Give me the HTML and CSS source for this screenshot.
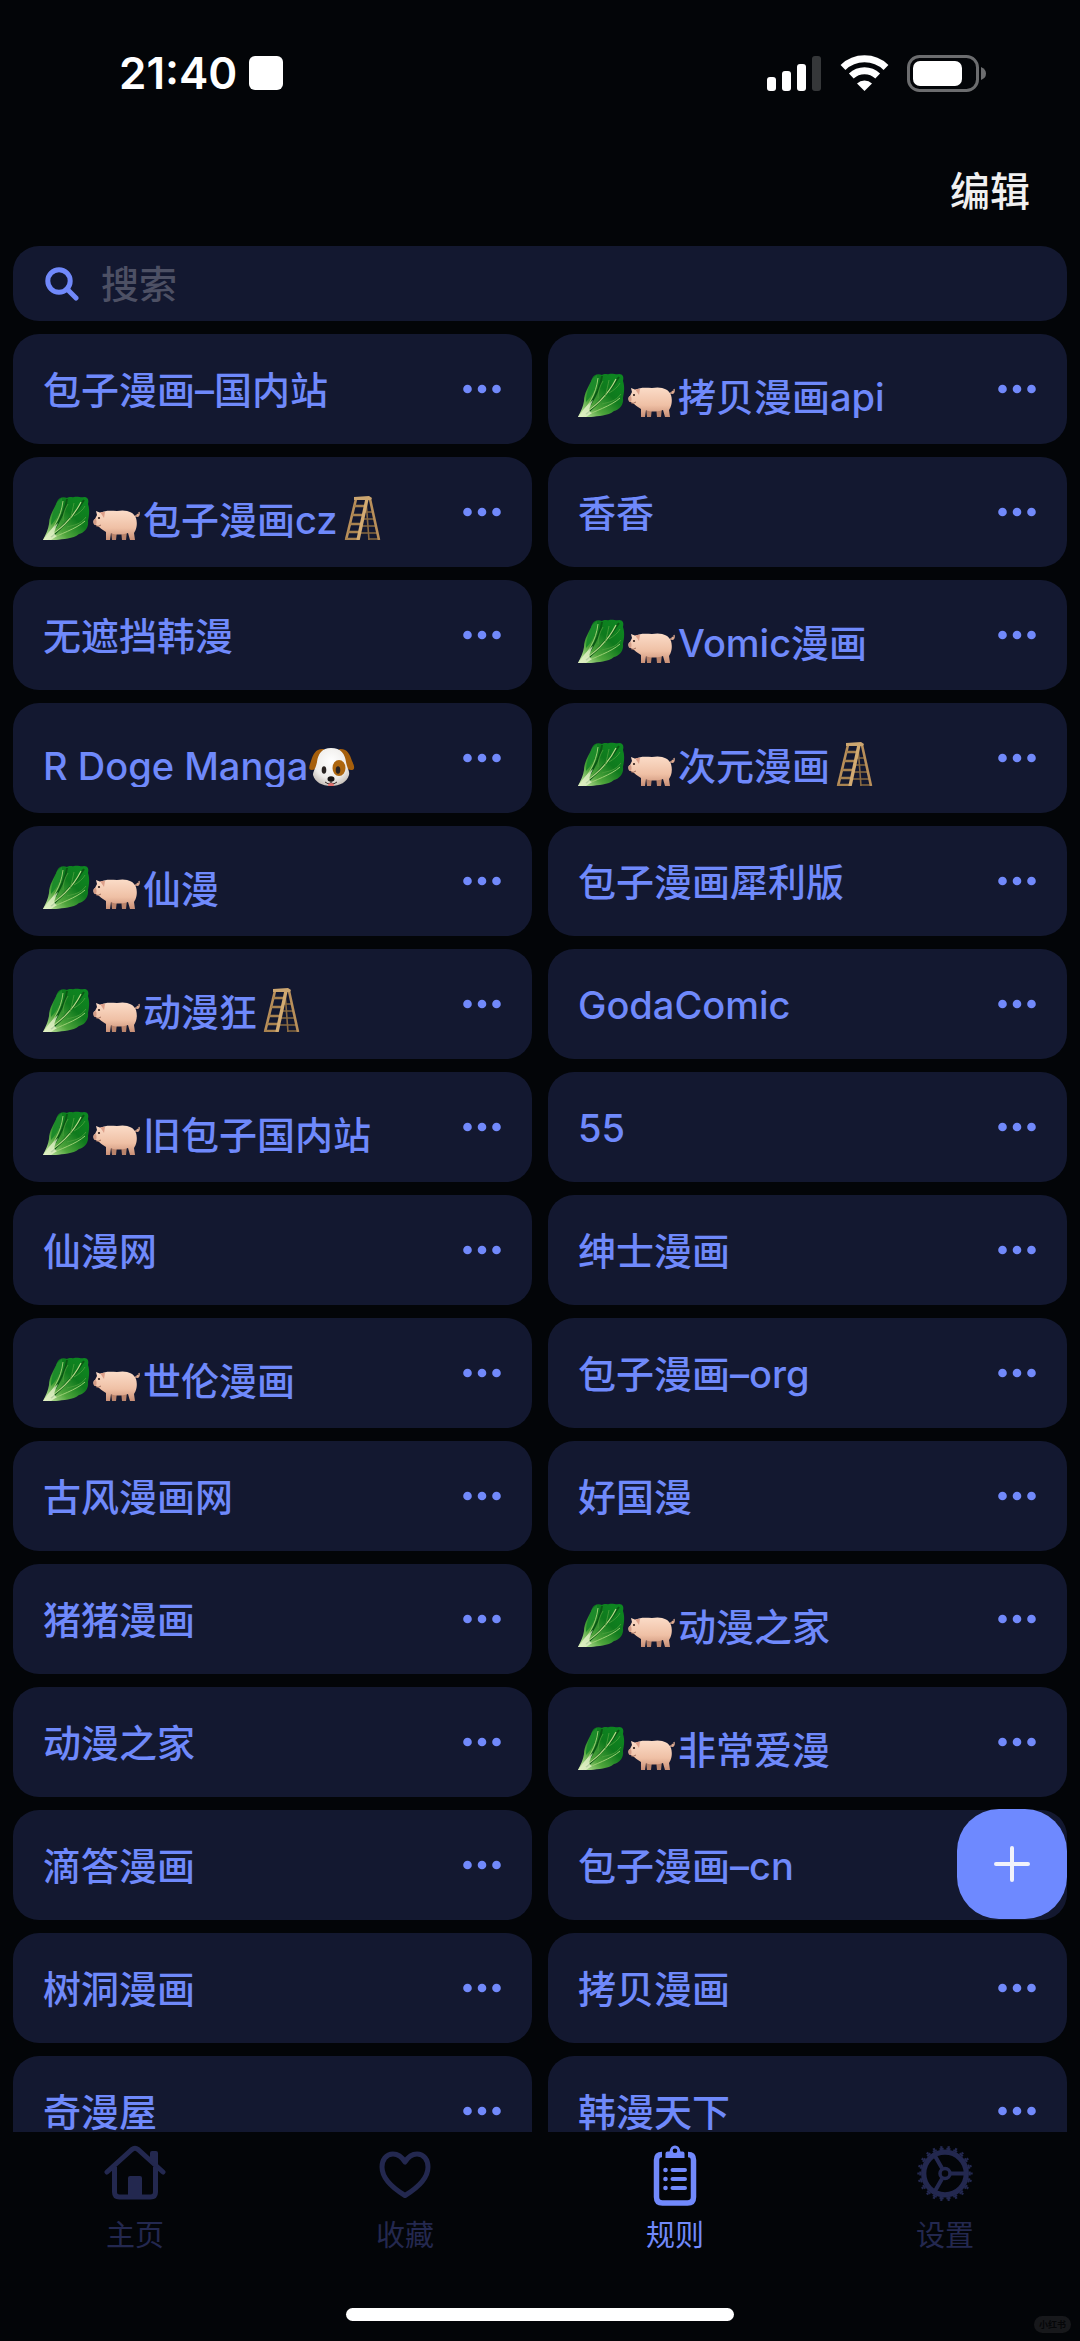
FILE: index.html
```html
<!DOCTYPE html>
<html lang="zh-CN">
<head>
    <meta charset="UTF-8">
    <meta name="viewport" content="width=device-width, initial-scale=1.0">
    <title>规则</title>
    <link rel="stylesheet" href="styles.css">
</head>
<body>
    <!-- shared drawings -->
    <svg class="sprite" aria-hidden="true">
        <defs>
            <linearGradient id="leafFill" x1="0" y1="1" x2="1" y2="0">
                <stop offset="0" stop-color="#d9efb4"/>
                <stop offset="0.3" stop-color="#4fa53c"/>
                <stop offset="0.6" stop-color="#0f7a1d"/>
                <stop offset="1" stop-color="#0c8a22"/>
            </linearGradient>
            <linearGradient id="pigFill" x1="0" y1="0" x2="0" y2="1">
                <stop offset="0" stop-color="#fbdcc8"/>
                <stop offset="0.6" stop-color="#efc0a5"/>
                <stop offset="1" stop-color="#c98f76"/>
            </linearGradient>
            <radialGradient id="dogFill" cx="0.5" cy="0.35" r="0.65">
                <stop offset="0" stop-color="#ffffff"/>
                <stop offset="0.7" stop-color="#eeece9"/>
                <stop offset="1" stop-color="#c9c2bb"/>
            </radialGradient>
        </defs>
        <symbol id="leaf" viewBox="0 0 50 44">
            <path d="M0 44C3 38 5 34 6 28C6 20 11 13 14 6C15 2 20 0 24 2C27 0 29 2 31 1C35 0 38 2 41 1C45 1 46 4 45 8C47 14 46 20 45 25C46 32 41 37 36 38C30 43 20 43 13 44Z" fill="url(#leafFill)"/>
            <path d="M14 6C11 15 8 20 8 29C14 23 20 12 19 2Z" fill="#1c8b2a"/>
            <path d="M24 3C23 12 18 22 12 32M41 4C34 15 24 27 8 41" fill="none" stroke="#0a5714" stroke-width="2"/>
            <path d="M1 43C10 33 18 22 20 5M5 44C17 38 33 33 42 25" fill="none" stroke="#9ccf74" stroke-width="1"/>
            <path d="M3 43C16 34 29 24 38 6" fill="none" stroke="#b5dd88" stroke-width="1.2"/>
            <path d="M20 25C20 18 22 13 25 8M27 24C29 17 30 12 31 7M31 20C36 17 40 14 42 10M24 31C31 29 37 29 43 21" fill="none" stroke="#4f9f3e" stroke-width="0.8"/>
            <path d="M0 44C4 38 8 33 15 27C12 34 9 38 14 40L8 44Z" fill="#e6f3cc" opacity="0.8"/>
        </symbol>
        <symbol id="pig" viewBox="0 0 50 44">
            <path d="M42 20C46 21 45 17 44 19C43 21 47 21 46 16" fill="none" stroke="#dba88e" stroke-width="1.3"/>
            <path d="M28 34L29 44H33L34 35ZM18 35L19 44H23L24 35Z" fill="#b9836b"/>
            <path d="M3 15L8 17C12 14 18 15 24 15C33 13 41 16 43 22C45 29 43 34 41 37L42 44H37L35 37C28 39 22 39 18 37L17 44H13L13 36C9 34 7 31 4 30L1 28C0 26 0 24 2 23L4 19Z" fill="url(#pigFill)"/>
            <path d="M7 16L12 16L11 22Z" fill="#dda08a"/>
            <ellipse cx="2" cy="26" rx="1.5" ry="3" fill="#d39c87"/>
            <circle cx="6" cy="22" r="1.1" fill="#2d1c18"/>
            <path d="M3 30Q5 31 8 29" fill="none" stroke="#8f5d4c" stroke-width="0.8"/>
        </symbol>
        <symbol id="ladder" viewBox="0 0 50 44">
            <path d="M27 16H34M26 23H36M24 30H38M23 37H40M30 43H42" stroke="#86683f" stroke-width="1.6"/>
            <path d="M28 4L31 44" fill="none" stroke="#8a6a42" stroke-width="1.6"/>
            <path d="M32 3L41 44" fill="none" stroke="#b98f5a" stroke-width="2.6"/>
            <path d="M18 3L8 44" fill="none" stroke="#b98f5a" stroke-width="2.6"/>
            <path d="M16 10H28M14 19H26M12 28H24M10 36H22M7 43H21" stroke="#a88250" stroke-width="2.4"/>
            <path d="M29 3L20 44" stroke="#d3ab72" stroke-width="3.4"/>
            <path d="M16 1L31 0L34 2L33 4L16 4Z" fill="#cba570"/>
        </symbol>
        <symbol id="dog" viewBox="0 0 50 44">
            <path d="M16 7C8 6 5 12 3 19C1 25 0 28 4 28C9 28 10 21 15 13Z" fill="#a65f0c"/>
            <path d="M31 7C39 6 42 12 44 19C47 25 47 28 43 28C38 28 37 21 33 13Z" fill="#a65f0c"/>
            <path d="M23 6C33 6 37 12 38 20C39 26 42 29 41 33C39 40 32 44 23 44C14 44 7 40 5 33C5 29 8 26 9 20C10 12 14 6 23 6Z" fill="url(#dogFill)"/>
            <ellipse cx="31" cy="26" rx="6.5" ry="8" fill="#ad660e"/>
            <ellipse cx="16" cy="28" rx="2.3" ry="3.8" fill="#292321"/>
            <ellipse cx="30" cy="28" rx="2.3" ry="3.8" fill="#292321"/>
            <ellipse cx="23" cy="37" rx="3.5" ry="2.7" fill="#161313"/>
            <path d="M23 39V41M17 40Q20 43 23 41Q26 43 29 40" fill="none" stroke="#3a302d" stroke-width="1"/>
            <ellipse cx="23" cy="43" rx="3" ry="2" fill="#e0706e"/>
        </symbol>
        <symbol id="dots" viewBox="0 0 38 10">
            <circle cx="4.5" cy="5" r="4.3"/>
            <circle cx="19" cy="5" r="4.3"/>
            <circle cx="33.5" cy="5" r="4.3"/>
        </symbol>
    </svg>

    <div class="app">
        <div class="status-bar">
            <div class="clock">
                <span>21:40</span>
                <span class="clock-mark"></span>
            </div>
            <div class="status-icons">
                <svg class="signal" viewBox="0 0 55 35" aria-hidden="true">
                    <rect x="0" y="21" width="9" height="14" rx="3"/>
                    <rect x="15" y="15" width="9" height="20" rx="3"/>
                    <rect x="30" y="8" width="9" height="27" rx="3"/>
                    <rect x="45" y="0" width="9" height="35" rx="3" opacity="0.2"/>
                </svg>
                <svg class="wifi" viewBox="0 0 49 36" aria-hidden="true">
                    <path d="M3 12.5A31 31 0 0 1 46 12.5M11.3 21A19.5 19.5 0 0 1 37.7 21" fill="none" stroke="#fff" stroke-width="7"/>
                    <path d="M24.5 36L17 28.5A11 11 0 0 1 32 28.5Z"/>
                </svg>
                <svg class="battery" viewBox="0 0 79 37" aria-hidden="true">
                    <rect x="1.5" y="1.5" width="69" height="34" rx="11" fill="none" stroke="#6c6d6f" stroke-width="3"/>
                    <rect x="6" y="6" width="49" height="25" rx="7"/>
                    <path d="M74 12Q79 14 79 18.5Q79 23 74 25Z" fill="#6c6d6f"/>
                </svg>
            </div>
        </div>

        <header class="toolbar">
            <button type="button" class="edit-button">编辑</button>
        </header>

        <label class="search">
            <svg class="search-icon" viewBox="0 0 34 34" aria-hidden="true">
                <circle cx="14" cy="14" r="11.2"/>
                <path d="M22 22L31 31"/>
            </svg>
            <input type="search" class="search-input" placeholder="搜索" aria-label="搜索">
        </label>

        <main class="content">
            <ul class="rules">
                <li class="rule"><span class="rule-name">包子漫画–国内站</span><button type="button" class="more" aria-label="更多"><svg><use href="#dots"/></svg></button></li>
                <li class="rule"><span class="rule-name with-emoji"><svg class="emoji"><use href="#leaf"/></svg><svg class="emoji"><use href="#pig"/></svg>拷贝漫画api</span><button type="button" class="more" aria-label="更多"><svg><use href="#dots"/></svg></button></li>
                <li class="rule"><span class="rule-name with-emoji"><svg class="emoji"><use href="#leaf"/></svg><svg class="emoji"><use href="#pig"/></svg>包子漫画cz<svg class="emoji"><use href="#ladder"/></svg></span><button type="button" class="more" aria-label="更多"><svg><use href="#dots"/></svg></button></li>
                <li class="rule"><span class="rule-name">香香</span><button type="button" class="more" aria-label="更多"><svg><use href="#dots"/></svg></button></li>
                <li class="rule"><span class="rule-name">无遮挡韩漫</span><button type="button" class="more" aria-label="更多"><svg><use href="#dots"/></svg></button></li>
                <li class="rule"><span class="rule-name with-emoji"><svg class="emoji"><use href="#leaf"/></svg><svg class="emoji"><use href="#pig"/></svg>Vomic漫画</span><button type="button" class="more" aria-label="更多"><svg><use href="#dots"/></svg></button></li>
                <li class="rule"><span class="rule-name with-emoji">R Doge Manga<svg class="emoji"><use href="#dog"/></svg></span><button type="button" class="more" aria-label="更多"><svg><use href="#dots"/></svg></button></li>
                <li class="rule"><span class="rule-name with-emoji"><svg class="emoji"><use href="#leaf"/></svg><svg class="emoji"><use href="#pig"/></svg>次元漫画<svg class="emoji"><use href="#ladder"/></svg></span><button type="button" class="more" aria-label="更多"><svg><use href="#dots"/></svg></button></li>
                <li class="rule"><span class="rule-name with-emoji"><svg class="emoji"><use href="#leaf"/></svg><svg class="emoji"><use href="#pig"/></svg>仙漫</span><button type="button" class="more" aria-label="更多"><svg><use href="#dots"/></svg></button></li>
                <li class="rule"><span class="rule-name">包子漫画犀利版</span><button type="button" class="more" aria-label="更多"><svg><use href="#dots"/></svg></button></li>
                <li class="rule"><span class="rule-name with-emoji"><svg class="emoji"><use href="#leaf"/></svg><svg class="emoji"><use href="#pig"/></svg>动漫狂<svg class="emoji"><use href="#ladder"/></svg></span><button type="button" class="more" aria-label="更多"><svg><use href="#dots"/></svg></button></li>
                <li class="rule"><span class="rule-name">GodaComic</span><button type="button" class="more" aria-label="更多"><svg><use href="#dots"/></svg></button></li>
                <li class="rule"><span class="rule-name with-emoji"><svg class="emoji"><use href="#leaf"/></svg><svg class="emoji"><use href="#pig"/></svg>旧包子国内站</span><button type="button" class="more" aria-label="更多"><svg><use href="#dots"/></svg></button></li>
                <li class="rule"><span class="rule-name">55</span><button type="button" class="more" aria-label="更多"><svg><use href="#dots"/></svg></button></li>
                <li class="rule"><span class="rule-name">仙漫网</span><button type="button" class="more" aria-label="更多"><svg><use href="#dots"/></svg></button></li>
                <li class="rule"><span class="rule-name">绅士漫画</span><button type="button" class="more" aria-label="更多"><svg><use href="#dots"/></svg></button></li>
                <li class="rule"><span class="rule-name with-emoji"><svg class="emoji"><use href="#leaf"/></svg><svg class="emoji"><use href="#pig"/></svg>世伦漫画</span><button type="button" class="more" aria-label="更多"><svg><use href="#dots"/></svg></button></li>
                <li class="rule"><span class="rule-name">包子漫画–org</span><button type="button" class="more" aria-label="更多"><svg><use href="#dots"/></svg></button></li>
                <li class="rule"><span class="rule-name">古风漫画网</span><button type="button" class="more" aria-label="更多"><svg><use href="#dots"/></svg></button></li>
                <li class="rule"><span class="rule-name">好国漫</span><button type="button" class="more" aria-label="更多"><svg><use href="#dots"/></svg></button></li>
                <li class="rule"><span class="rule-name">猪猪漫画</span><button type="button" class="more" aria-label="更多"><svg><use href="#dots"/></svg></button></li>
                <li class="rule"><span class="rule-name with-emoji"><svg class="emoji"><use href="#leaf"/></svg><svg class="emoji"><use href="#pig"/></svg>动漫之家</span><button type="button" class="more" aria-label="更多"><svg><use href="#dots"/></svg></button></li>
                <li class="rule"><span class="rule-name">动漫之家</span><button type="button" class="more" aria-label="更多"><svg><use href="#dots"/></svg></button></li>
                <li class="rule"><span class="rule-name with-emoji"><svg class="emoji"><use href="#leaf"/></svg><svg class="emoji"><use href="#pig"/></svg>非常爱漫</span><button type="button" class="more" aria-label="更多"><svg><use href="#dots"/></svg></button></li>
                <li class="rule"><span class="rule-name">滴答漫画</span><button type="button" class="more" aria-label="更多"><svg><use href="#dots"/></svg></button></li>
                <li class="rule"><span class="rule-name">包子漫画–cn</span><button type="button" class="more" aria-label="更多"><svg><use href="#dots"/></svg></button></li>
                <li class="rule"><span class="rule-name">树洞漫画</span><button type="button" class="more" aria-label="更多"><svg><use href="#dots"/></svg></button></li>
                <li class="rule"><span class="rule-name">拷贝漫画</span><button type="button" class="more" aria-label="更多"><svg><use href="#dots"/></svg></button></li>
                <li class="rule"><span class="rule-name">奇漫屋</span><button type="button" class="more" aria-label="更多"><svg><use href="#dots"/></svg></button></li>
                <li class="rule"><span class="rule-name">韩漫天下</span><button type="button" class="more" aria-label="更多"><svg><use href="#dots"/></svg></button></li>
            </ul>
            <button type="button" class="add-button" aria-label="添加">
                <svg viewBox="0 0 36 36" aria-hidden="true"><path d="M18 2V34M2 18H34"/></svg>
            </button>
        </main>

        <footer class="bottom">
            <nav class="tabs">
                <a href="#home" class="tab">
                    <svg viewBox="0 0 62 62" aria-hidden="true">
                        <path d="M3 27L28 4.5Q31 2 34 4.5L59 27" fill="none" stroke="currentColor" stroke-width="5" stroke-linecap="round"/>
                        <path d="M10.5 22V47Q10.5 52 15.5 52H46.5Q51.5 52 51.5 47V22" fill="none" stroke="currentColor" stroke-width="5"/>
                        <path d="M46 8Q46 6 48 6H52Q54 6 54 8V23L46 16Z" fill="currentColor"/>
                        <path d="M24 52V33Q24 31 26 31H36Q38 31 38 33V52Z" fill="currentColor"/>
                    </svg>
                    <span>主页</span>
                </a>
                <a href="#favorites" class="tab">
                    <svg viewBox="0 0 62 62" aria-hidden="true">
                        <path d="M31 17C28 12 24 9 19 9C12 9 8 15 8 22C8 33 17 42 31 50.5C45 42 54 33 54 22C54 15 50 9 43 9C38 9 34 12 31 17Z" fill="none" stroke="currentColor" stroke-width="5" stroke-linejoin="round"/>
                    </svg>
                    <span>收藏</span>
                </a>
                <a href="#rules" class="tab active">
                    <svg viewBox="0 0 62 62" aria-hidden="true">
                        <path d="M18 9.5Q12.5 9.5 12.5 15V52Q12.5 58 18.5 58H43.5Q49.5 58 49.5 52V15Q49.5 9.5 44 9.5" fill="none" stroke="currentColor" stroke-width="5.5"/>
                        <path fill-rule="evenodd" d="M21.5 13V8.5Q21.5 6.5 23.5 6.5H25.5Q26.5 0.5 31 0.5Q35.5 0.5 36.5 6.5H38.5Q40.5 6.5 40.5 8.5V13ZM31 3.5A2.3 2.3 0 1 0 31 8.1A2.3 2.3 0 1 0 31 3.5Z" fill="currentColor"/>
                        <path d="M28.5 25H41M28.5 34H41M28.5 43H41" stroke="currentColor" stroke-width="4" stroke-linecap="round"/>
                        <circle cx="21.5" cy="25" r="2.3" fill="currentColor"/>
                        <circle cx="21.5" cy="34" r="2.3" fill="currentColor"/>
                        <circle cx="21.5" cy="43" r="2.3" fill="currentColor"/>
                    </svg>
                    <span>规则</span>
                </a>
                <a href="#settings" class="tab">
                    <svg viewBox="0 0 62 62" aria-hidden="true">
                        <g fill="none" stroke="currentColor">
                            <circle cx="31" cy="28.5" r="21.3" stroke-width="5.3"/>
                            <circle cx="31" cy="28.5" r="24.8" stroke-width="2" pathLength="220" stroke-dasharray="6 4" stroke-dashoffset="3"/>
                            <circle cx="31" cy="28.5" r="26.7" stroke-width="2" pathLength="220" stroke-dasharray="3 7" stroke-dashoffset="1.5"/>
                            <circle cx="31" cy="28.5" r="5" stroke-width="3.5"/>
                            <path d="M37 28.5H51M28 23.3L21 11M28 33.7L21 46" stroke-width="4"/>
                        </g>
                    </svg>
                    <span>设置</span>
                </a>
            </nav>
            <div class="home-indicator"></div>
            <span class="watermark">小红书</span>
        </footer>
    </div>
</body>
</html>
```

FILE: styles.css
```css
* {
    box-sizing: border-box;
}

body {
    margin: 0;
    background-color: #030508;
    color: #6f89fb;
    font-family: Inter, "Noto Sans CJK SC", sans-serif;
    font-weight: 500;
}

button {
    padding: 0;
    border: none;
    background: none;
    color: inherit;
    font: inherit;
    cursor: pointer;
}

.sprite {
    position: absolute;
    width: 0;
    height: 0;
}

.app {
    display: flex;
    flex-direction: column;
    height: 100vh;
}

/* status bar */

.status-bar {
    display: flex;
    justify-content: space-between;
    align-items: center;
    height: 146px;
    padding: 0 94px 0 119px;
    color: #fff;
}

.clock {
    display: flex;
    align-items: center;
    gap: 12px;
    font-size: 44px;
    font-weight: 600;
}

.clock-mark {
    width: 34px;
    height: 34px;
    border-radius: 6px;
    background-color: #fff;
}

.status-icons {
    display: flex;
    align-items: center;
    gap: 18px;
    fill: #fff;
}

.signal {
    width: 55px;
    height: 35px;
}

.wifi {
    width: 49px;
    height: 36px;
}

.battery {
    width: 79px;
    height: 37px;
}

/* toolbar and search */

.toolbar {
    display: flex;
    justify-content: flex-end;
    align-items: center;
    height: 86px;
    padding: 0 50px;
}

.edit-button {
    color: #f0f0f0;
    font-size: 40px;
}

.search {
    display: flex;
    align-items: center;
    gap: 22px;
    height: 75px;
    margin: 14px 13px 13px;
    padding: 0 32px;
    border-radius: 26px;
    background-color: #131830;
}

.search-icon {
    width: 34px;
    height: 34px;
    fill: none;
    stroke: #7189fb;
    stroke-width: 5;
    stroke-linecap: round;
}

.search-input {
    flex: 1;
    min-width: 0;
    padding: 0;
    border: none;
    outline: none;
    background: none;
    color: #f0f0f0;
    font: inherit;
    font-size: 38px;
}

.search-input::placeholder {
    color: #4d5064;
}

/* rule list */

.content {
    position: relative;
    flex: 1;
    min-height: 0;
    overflow: hidden;
}

.rules {
    display: grid;
    grid-template-columns: 1fr 1fr;
    gap: 13px 16px;
    margin: 0;
    padding: 0 13px;
    list-style: none;
}

.rule {
    display: flex;
    justify-content: space-between;
    align-items: center;
    height: 110px;
    padding: 0 31px 0 30px;
    border-radius: 26px;
    background-color: #131830;
}

.rule-name {
    padding-top: 2px;
    font-size: 38px;
    line-height: 54px;
    white-space: nowrap;
}

/* emoji push the line down, its lower edge is trimmed */
.with-emoji {
    padding-top: 16px;
    clip-path: inset(0 0 6px 0);
}

.emoji {
    width: 50px;
    height: 44px;
    margin-top: 3px;
    vertical-align: top;
}

.more {
    display: flex;
    align-items: center;
    height: 54px;
}

.more svg {
    width: 38px;
    height: 10px;
    fill: #7189fb;
}

.add-button {
    position: absolute;
    right: 13px;
    bottom: 213px;
    display: flex;
    justify-content: center;
    align-items: center;
    width: 110px;
    height: 110px;
    border-radius: 42px;
    background-color: #6e89ff;
}

.add-button svg {
    width: 36px;
    height: 36px;
    stroke: #f1f2fb;
    stroke-width: 4;
    stroke-linecap: round;
}

/* bottom tabs */

.bottom {
    position: relative;
    height: 209px;
    padding-top: 13px;
}

.tabs {
    display: grid;
    grid-template-columns: repeat(4, 1fr);
}

.tab {
    display: flex;
    flex-direction: column;
    align-items: center;
    gap: 8px;
    color: #23284f;
    font-size: 29px;
    font-weight: 400;
    line-height: 42px;
    text-decoration: none;
}

.tab svg {
    width: 62px;
    height: 62px;
}

.tab.active {
    color: #7189fb;
}

.home-indicator {
    width: 36%;
    height: 13px;
    margin: 51px auto 0;
    border-radius: 7px;
    background-color: #fff;
}

.watermark {
    position: absolute;
    right: 9px;
    bottom: 8px;
    padding: 0 5px;
    border-radius: 9px;
    background-color: #17181b;
    color: #050608;
    font-size: 9px;
    font-weight: 700;
    line-height: 17px;
}
```
